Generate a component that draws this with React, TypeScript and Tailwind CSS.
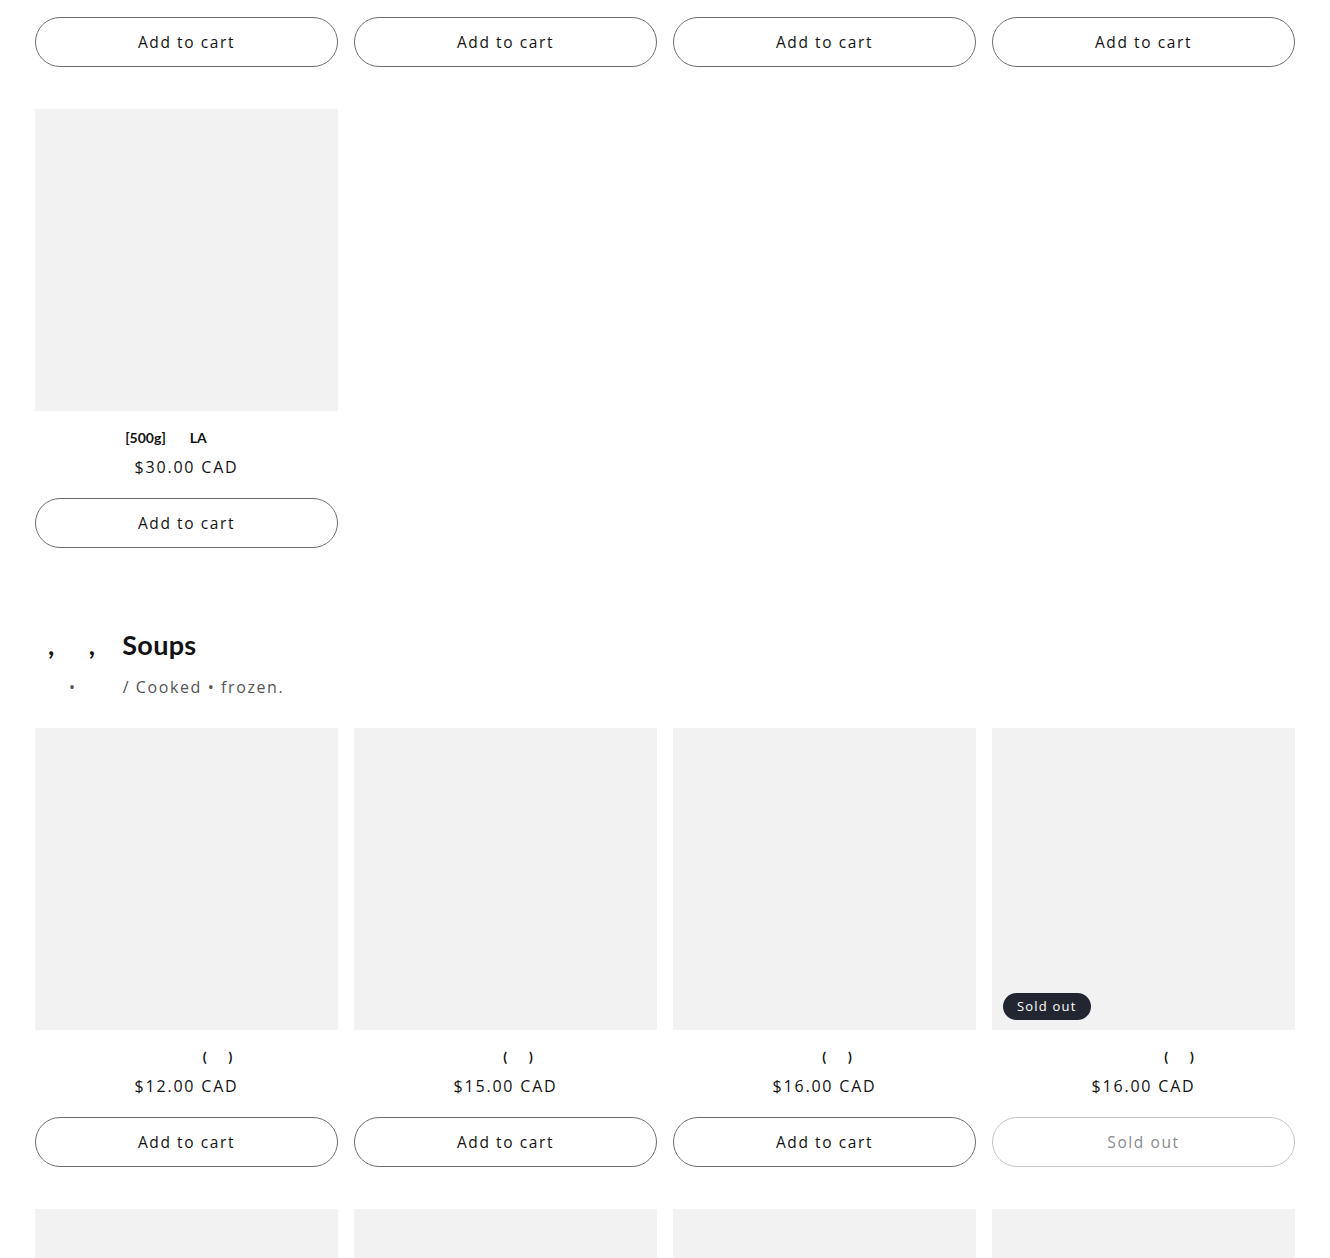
import React from "react";

const body = "font-['Open_Sans','Liberation_Sans',sans-serif]";
const head = "font-['Lato','Liberation_Sans',sans-serif]";

type Product = {
  title: React.ReactNode;
  price: string;
  soldOut?: boolean;
};

const CartButton = ({ soldOut }: { soldOut?: boolean }) => (
  <button
    className={`w-full h-[50px] pt-[1px] rounded-full border bg-white text-[15.5px] tracking-[1.6px] ${body} ${
      soldOut
        ? "border-[#c4c4c4] text-[#8a8a8a]"
        : "border-[#6e6e6e] text-[#121212]"
    }`}
  >
    {soldOut ? "Sold out" : "Add to cart"}
  </button>
);

const ProductCard = ({ title, price, soldOut }: Product) => (
  <div className="flex flex-col">
    <div className="relative h-[302px] bg-[#f2f2f2]">
      {soldOut && (
        <span
          className={`absolute left-[11px] bottom-[10px] h-[27px] px-[14px] rounded-full bg-[#232631] text-white text-[13px] tracking-[1.2px] flex items-center ${body}`}
        >
          Sold out
        </span>
      )}
    </div>
    <div className="pt-[17px] flex flex-col items-center">
      <div
        className={`h-[20px] leading-[20px] text-[14px] font-bold text-[#121212] whitespace-nowrap ${head}`}
      >
        {title}
      </div>
      <div
        className={`mt-[7px] h-[24px] leading-[24px] text-[16px] tracking-[1.8px] text-[#121212] ${body}`}
      >
        {price}
      </div>
    </div>
    <div className="mt-[19px]">
      <CartButton soldOut={soldOut} />
    </div>
  </div>
);

const Sp = ({ w }: { w: string }) => <span className={`inline-block ${w}`} />;

const Paren = ({ lead, inner }: { lead: string; inner: string }) => (
  <span>
    <Sp w={lead} />(
    <Sp w={inner} />)
  </span>
);

export default function App() {
  const soups: Product[] = [
    { title: <Paren lead="w-[62px]" inner="w-[22px]" />, price: "$12.00 CAD" },
    { title: <Paren lead="w-[25px]" inner="w-[22px]" />, price: "$15.00 CAD" },
    { title: <Paren lead="w-[25px]" inner="w-[22px]" />, price: "$16.00 CAD" },
    {
      title: <Paren lead="w-[71px]" inner="w-[22px]" />,
      price: "$16.00 CAD",
      soldOut: true,
    },
  ];

  return (
    <div className="bg-white min-h-screen px-[35px] pt-[17px] overflow-hidden">
      <div className="grid grid-cols-4 gap-x-[16px] gap-y-[42px]">
        <CartButton />
        <CartButton />
        <CartButton />
        <CartButton />
        <ProductCard
          title={
            <span>
              [500g]
              <Sp w="w-[24px]" />
              LA
              <Sp w="w-[41px]" />
            </span>
          }
          price="$30.00 CAD"
        />
      </div>

      <div className="mt-[80px]">
        <h2
          className={`h-[34px] leading-[34px] text-[27px] font-bold tracking-[0.3px] text-[#121212] ${head}`}
        >
          <Sp w="w-[13px]" />,<Sp w="w-[34px]" />,<Sp w="w-[27px]" />
          Soups
        </h2>
        <p
          className={`mt-[13px] h-[24px] leading-[24px] text-[16px] tracking-[1.6px] text-[#555555] ${body}`}
        >
          <Sp w="w-[34px]" />•<Sp w="w-[46px]" />/ Cooked • frozen.
        </p>
      </div>

      <div className="mt-[29px] grid grid-cols-4 gap-x-[16px] gap-y-[42px]">
        {soups.map((p, i) => (
          <ProductCard key={i} {...p} />
        ))}
        <div className="h-[302px] bg-[#f2f2f2]" />
        <div className="h-[302px] bg-[#f2f2f2]" />
        <div className="h-[302px] bg-[#f2f2f2]" />
        <div className="h-[302px] bg-[#f2f2f2]" />
      </div>
    </div>
  );
}
